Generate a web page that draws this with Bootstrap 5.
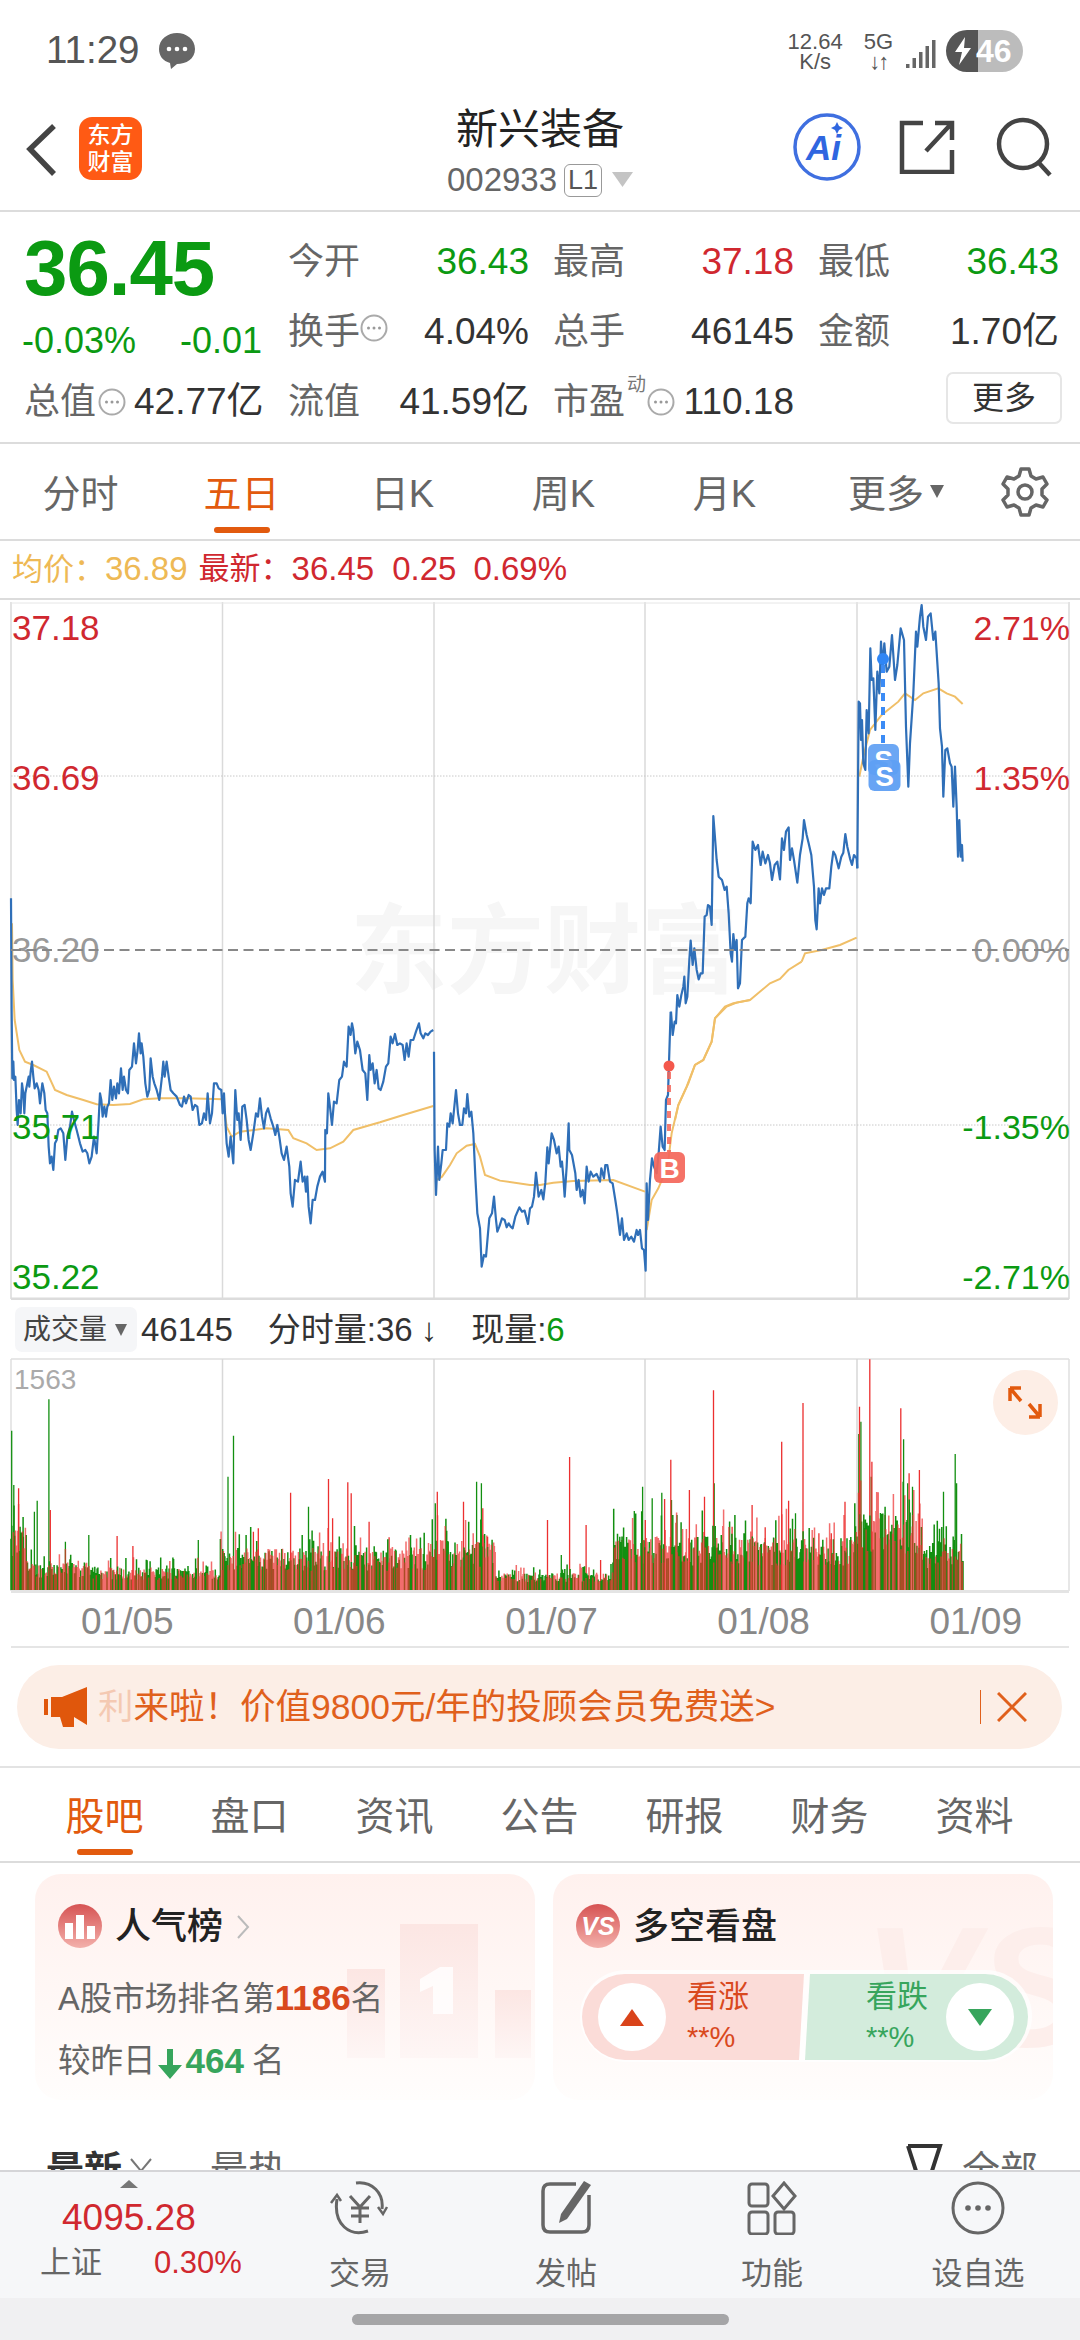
<!DOCTYPE html>
<html lang="zh-CN">
<head>
<meta charset="utf-8">
<title>新兴装备</title>
<link href="https://cdn.jsdelivr.net/npm/bootstrap@5.3.0/dist/css/bootstrap.min.css" rel="stylesheet">
<style>
:root{--up:#d0282f;--down:#0b9a12;--acc:#e25a0e;--lab:#666;--ink:#333}
html,body{margin:0;width:1080px;height:2340px;overflow:hidden;background:#fff}
body{font-family:"Liberation Sans","Noto Sans CJK SC",sans-serif;color:var(--ink)}
svg{display:block}
.x-app{height:2340px;width:1080px}
.x-status{height:90px;padding:30px 57px 0 46px;color:#555}
.x-time{font-size:38.500px;line-height:40px;margin-right:19px}
.x-net{font-size:22px;line-height:20px;text-align:center;color:#555;font-weight:500}
.x-batt{width:77px;height:42px;border-radius:21px;background:linear-gradient(90deg,#555 42%,#bcbcbc 42%);color:#fff;font-weight:700;font-size:32px;line-height:42px;padding-left:30px;position:relative}
.x-batt svg{position:absolute;left:8px;top:7px}
.x-head{height:122px;border-bottom:2px solid #dcdcdc;padding:0 28px 0 26px;position:relative}
.x-logo{width:63px;height:63px;border-radius:13px;background:#ff5a14;color:#fff;font-size:23px;line-height:27px;font-weight:500;text-align:center;padding-top:5px;margin-left:21px;margin-top:27px}
.x-back{margin-top:33px}
.x-titlebox{position:absolute;left:0;right:0;top:15px;text-align:center}
.x-name{font-size:42px;line-height:50px;color:#222}
.x-code{font-size:33px;line-height:36px;color:#666;margin-top:7px;display:flex;justify-content:center;align-items:center}
.x-l1{font-size:27px;line-height:31px;border:1px solid #999;border-radius:6px;width:38px;margin-left:7px;color:#555}
.x-tri{margin-left:10px;margin-top:-2px}
.x-grid{display:grid;grid-template-columns:240px 241px 241px 241px;column-gap:24px;grid-template-rows:70px 70px 70px;padding:12px 0 10px 24px;height:232px;border-bottom:2px solid #dcdcdc}
.x-pricebox{grid-row:1 / span 2;grid-column:1;margin-left:-2px;margin-top:2px}
.x-price{font-size:78px;line-height:84px;font-weight:700;letter-spacing:-1px;color:var(--down);margin-left:2px}
.x-chg{font-size:36px;line-height:42px;color:var(--down);margin-top:10px;width:240px}
.x-cell{font-size:37px;line-height:44px;color:var(--ink)}
.x-lb{font-size:36px;color:var(--lab)}
.x-up{color:var(--up)}.x-dn{color:var(--down)}
.x-sup{font-size:19px;color:#777;line-height:20px;margin-top:-5px;margin-left:2px}
.x-more{width:116px;height:52px;font-size:32px;line-height:48px;padding:0;border:2px solid #e6e6e6;border-radius:7px;background:#fff;color:var(--ink);margin-top:8px;margin-right:-3px}
.x-tabs{height:97px;border-bottom:2px solid #dcdcdc;flex-wrap:nowrap}
.x-tab{width:161px;padding:28px 0 0!important;text-align:center;font-size:38px;line-height:44px;color:var(--lab)}
.x-tab.x-on{color:var(--acc)}
.x-bar{display:block;width:56px;height:6px;border-radius:3px;background:var(--acc);margin:11px auto 0}
.x-gear{margin:23px 0 0 0;position:absolute;left:1001px}
.x-info{height:59px;border-bottom:2px solid #dcdcdc;font-size:31px;line-height:56px;padding-left:12px;color:var(--up);white-space:nowrap}
.x-nm{font-size:33px}
.x-vrow{height:58px;padding:7px 0 0 15px;font-size:30px;color:var(--ink);white-space:nowrap}
.x-vbtn{width:122px;height:45px;background:#f5f6f8;border-radius:7px;font-size:28px;line-height:45px;padding-left:8px;color:#444;margin-right:4px;display:flex;align-items:center}
.x-vnum{font-size:33px;line-height:45px}
.x-axis{height:52px;color:#888;font-size:37px;line-height:56px;padding-left:81px;gap:119.500px}
.x-rule{height:2px;background:#e5e5e5;margin:0 11px}
.x-banner{margin:17px 18px 0 17px;height:84px;background:#fceee6;color:#e0601c;font-size:35.500px;line-height:84px;padding-left:27px;border-radius:42px;white-space:nowrap}
.x-fade{opacity:.25}
.x-sep{width:1px;height:34px;background:#e0601c;margin-left:auto;margin-right:16px}
.x-close{margin-right:35px}
.x-stabs{margin-top:17px;border-top:2px solid #e3e3e3;border-bottom:2px solid #dcdcdc;height:97px;padding-left:32px;flex-wrap:nowrap}
.x-stab{width:145px;padding:26px 0 0!important;text-align:center;font-size:39px;line-height:46px;color:var(--lab)}
.x-stab.x-on{color:var(--acc)}
.x-stab .x-bar{margin-top:9px}
.x-cards{padding:11px 27px 0 35px;gap:18px}
.x-card{width:500px;height:226px;border:0;border-radius:26px;background:linear-gradient(180deg,#fff1ee,#fffdfc);overflow:hidden;padding:30px 0 0 23px;position:relative}
.x-deco{position:absolute;left:0;top:0;width:500px;height:226px}
.x-vs::before{content:"VS";position:absolute;left:310px;top:18px;font-size:170px;line-height:190px;font-weight:700;font-style:italic;color:#fdeeeb}
.x-ctitle{position:relative;height:45px;font-size:36px;line-height:45px;font-weight:500;color:#222;gap:13px}
.x-circ{width:44px;height:44px;border-radius:50%;background:linear-gradient(180deg,#d65353,#f3b0ab);flex:none;display:flex;align-items:center;justify-content:center;color:#fff;font-weight:700;font-style:italic;font-size:25px}
.x-line{position:relative;font-size:32.500px;line-height:40px;color:#666;white-space:nowrap}
.x-hot{font-weight:700;color:#d9491e;font-size:35px}
.x-grn{font-weight:700;color:#37a55c;font-size:35px}
.x-pill{position:relative;margin:21px 0 0 4px;width:452px;height:92px;padding:4px 2px 2px;background:rgba(255,255,255,.75);border-radius:46px}
.x-red{width:222px;height:86px;background:#fbdcd8;border-radius:43px 0 0 43px;clip-path:polygon(0 0,100% 0,calc(100% - 5px) 100%,0 100%);color:#d9491e}
.x-green{width:223px;height:86px;background:#d3ecdc;border-radius:0 43px 43px 0;clip-path:polygon(5px 0,100% 0,100% 100%,0 100%);color:#37a55c;margin-left:1px}
.x-ball{width:68px;height:68px;border-radius:50%;background:#fff;display:flex;align-items:center;justify-content:center;flex:none}
.x-vote{font-size:31px;line-height:38px}
.x-vote span{display:block;font-size:29px;line-height:38px;margin-top:2px}
.x-sort{margin-top:48px;padding-left:46px;font-size:38px;line-height:44px;color:var(--lab);position:relative;height:44px}
.x-foot{height:128px;background:#f6f7f9;border-top:2px solid #d5d5d8;flex:none}
.x-stock{width:257px;padding:8px 0 0 40px;font-size:31px;color:var(--lab);flex:none}
.x-stock svg{margin-left:80px}
.x-idx{font-size:37px;line-height:44px;color:var(--up);margin:8px 0 0 22px}
.x-item{width:206px;text-align:center;font-size:31px;line-height:38px;color:var(--lab);padding-top:9px;flex:none}
.x-item svg{margin:0 auto 20px}
.x-nav{height:42px;background:#f0f0f2;flex:none;padding-top:16px}
.x-handle{width:377px;height:11px;border-radius:6px;background:#a5a5a7;margin:0 auto}
</style>
</head>
<body>
<svg width="0" height="0" class="position-absolute">
<symbol id="dots" viewBox="0 0 28 28"><circle cx="14" cy="14" r="12.5" fill="none" stroke="#aaa" stroke-width="2"/><circle cx="8.5" cy="14" r="1.5" fill="#999"/><circle cx="14" cy="14" r="1.5" fill="#999"/><circle cx="19.5" cy="14" r="1.5" fill="#999"/></symbol>
<linearGradient id="fadebar" x1="0" y1="0" x2="0" y2="1"><stop offset="0" stop-color="#fce6e3"/><stop offset="1" stop-color="#fef6f5"/></linearGradient>
</svg>
<div class="x-app d-flex flex-column">
 <div class="flex-grow-1 overflow-hidden">
  <div class="x-status d-flex">
   <div class="x-time">11:29</div>
   <svg width="36" height="37" viewBox="0 0 36 37" style="margin-top:3px"><path d="M18 0C27 0 36 6 36 16S27 31 18 31L12 36 11 30C4 28 0 23 0 16 0 6 9 0 18 0Z" fill="#666"/><circle cx="10" cy="16" r="2.3" fill="#fff"/><circle cx="18" cy="16" r="2.3" fill="#fff"/><circle cx="26" cy="16" r="2.3" fill="#fff"/></svg>
   <div class="ms-auto d-flex">
    <div class="x-net" style="margin-right:21px;margin-top:2px">12.64<br>K/s</div>
    <div class="x-net" style="margin-right:13px;margin-top:2px">5G<br><span style="letter-spacing:-2px">↓↑</span></div>
    <svg width="30" height="28" viewBox="0 0 30 28" style="margin:10px 10px 0 0"><g fill="#666"><rect x="0" y="24" width="3.5" height="4"/><rect x="6.5" y="18" width="3.5" height="10"/><rect x="13" y="12" width="3.5" height="16"/><rect x="19.5" y="6" width="3.5" height="22"/><rect x="26" y="0" width="3.5" height="28"/></g></svg>
    <div class="x-batt"><svg width="18" height="28" viewBox="0 0 18 28"><path d="M11 0 1 15H8L5 28 17 11H10Z" fill="#fff"/></svg>46</div>
   </div>
  </div>
  <div class="x-head d-flex">
   <svg class="x-back" width="32" height="54" viewBox="0 0 32 54"><path d="M28 3 4 26 28 51" fill="none" stroke="#444" stroke-width="5.5"/></svg>
   <div class="x-logo">东方<br>财富</div>
   <div class="x-titlebox">
    <div class="x-name">新兴装备</div>
    <div class="x-code">002933<span class="x-l1">L1</span><svg class="x-tri" width="21" height="15" viewBox="0 0 21 15"><path d="M0 0H21L10.500 15Z" fill="#c4c4c4"/></svg></div>
   </div>
   <div class="ms-auto d-flex position-relative">
    <svg width="68" height="68" viewBox="0 0 68 68" style="margin:23px 38px 0 0"><circle cx="34" cy="34" r="32" fill="none" stroke="#3f6fe0" stroke-width="3.500"/><text x="13" y="47" font-family="Liberation Sans" font-weight="700" font-style="italic" font-size="35" fill="#2f66e0">Ai</text><path d="M44 9l2 4 4 2-4 2-2 4-2-4-4-2 4-2Z" fill="#2f66e0"/></svg>
    <svg width="56" height="54" viewBox="0 0 56 54" style="margin:30px 41px 0 0"><path d="M24 3H3V52H53V30M27 31 53 3M36 3H53V20" fill="none" stroke="#444" stroke-width="4.500"/></svg>
    <svg width="56" height="60" viewBox="0 0 56 60" style="margin-top:27px"><circle cx="27" cy="27" r="24" fill="none" stroke="#444" stroke-width="4.500"/><path d="M43 46 54 58" stroke="#444" stroke-width="4.500"/></svg>
   </div>
  </div>
  <div class="x-grid">
   <div class="x-pricebox">
    <div class="x-price">36.45</div>
    <div class="x-chg d-flex justify-content-between"><span>-0.03%</span><span>-0.01</span></div>
   </div>
   <div class="x-cell d-flex justify-content-between mt-3"><span class="x-lb">今开</span><span class="x-dn">36.43</span></div>
   <div class="x-cell d-flex justify-content-between mt-3"><span class="x-lb">最高</span><span class="x-up">37.18</span></div>
   <div class="x-cell d-flex justify-content-between mt-3"><span class="x-lb">最低</span><span class="x-dn">36.43</span></div>
   <div class="x-cell d-flex justify-content-between mt-3"><span class="x-lb">换手</span><svg width="28" height="28" class="me-auto mt-1"><use href="#dots"/></svg><span>4.04%</span></div>
   <div class="x-cell d-flex justify-content-between mt-3"><span class="x-lb">总手</span><span>46145</span></div>
   <div class="x-cell d-flex justify-content-between mt-3"><span class="x-lb">金额</span><span>1.70亿</span></div>
   <div class="x-cell d-flex mt-3"><span class="x-lb">总值</span><svg width="28" height="28" class="mt-2" style="margin-left:2px"><use href="#dots"/></svg><span class="ms-2">42.77亿</span></div>
   <div class="x-cell d-flex justify-content-between mt-3"><span class="x-lb">流值</span><span>41.59亿</span></div>
   <div class="x-cell d-flex mt-3"><span class="x-lb">市盈</span><span class="x-sup">动</span><svg width="28" height="28" class="mt-2" style="margin-left:1px"><use href="#dots"/></svg><span class="ms-auto">110.18</span></div>
   <div class="d-flex justify-content-end"><button type="button" class="btn x-more">更多</button></div>
  </div>
  <ul class="nav x-tabs position-relative">
   <li><a class="nav-link x-tab">分时</a></li>
   <li><a class="nav-link x-tab x-on">五日<span class="x-bar"></span></a></li>
   <li><a class="nav-link x-tab">日K</a></li>
   <li><a class="nav-link x-tab">周K</a></li>
   <li><a class="nav-link x-tab">月K</a></li>
   <li><a class="nav-link x-tab d-flex justify-content-center" style="padding-left:14px!important;width:168px">更多<svg width="14" height="13" viewBox="0 0 14 13" style="margin:13px 0 0 6px"><path d="M0 0H14L7 13Z" fill="#666"/></svg></a></li>
   <li class="x-gear"><svg width="48" height="50" viewBox="0 0 48 50"><path d="M20 2H28L30 9 35 12 42 10 46 17 41 22V28L46 33 42 40 35 38 30 41 28 48H20L18 41 13 38 6 40 2 33 7 28V22L2 17 6 10 13 12 18 9Z" fill="none" stroke="#666" stroke-width="3.500" stroke-linejoin="round"/><circle cx="24" cy="25" r="7" fill="none" stroke="#666" stroke-width="3.500"/></svg></li>
  </ul>
  <div class="x-info d-flex"><span style="color:#eeb955">均价：<span class="x-nm">36.89</span></span><span style="margin-left:11px">最新：</span><span class="x-nm">36.45</span><span class="x-nm" style="margin-left:18px">0.25</span><span class="x-nm" style="margin-left:17px">0.69%</span></div>
  <svg width="1080" height="700" viewBox="0 600 1080 700" font-family="Liberation Sans, Noto Sans CJK SC, sans-serif">
   <text x="350" y="985" font-size="97" font-weight="700" fill="#f6f6f6" font-family="Noto Sans CJK SC">东方财富</text>
   <g stroke="#dadada" stroke-width="1.500"><path d="M11 602V1299M222.500 602V1299M434 602V1299M645 602V1299M857 602V1299M1069 602V1299"/></g>
   <path d="M11 603H1069" stroke="#e6e6e6"/>
   <path d="M11 1299H1069" stroke="#dcdcdc" stroke-width="3"/>
   <path d="M11 776H1069M11 1125H1069" stroke="#c8c8c8" stroke-dasharray="1.500 1.500"/>
   <g fill="none" stroke="#f0bf68" stroke-width="2">
    <polyline vector-effect="non-scaling-stroke" transform="translate(0 880) scale(.3333)" points="36,130 38,300 44,420 58,510 75,545 100,555 140,575 165,630 200,645 250,660 290,673 340,675 390,672 430,658 480,655 560,655 670,658"/>
    <polyline vector-effect="non-scaling-stroke" transform="translate(0 880) scale(.3333)" points="670,658 680,740 695,770 720,755 800,745 865,750 880,775 920,790 950,810 990,805 1030,785 1060,750 1140,727 1210,705 1300,678"/>
    <polyline vector-effect="non-scaling-stroke" transform="translate(430 1000) scale(.3333)" points="20,540 36,530 60,495 80,460 110,437 135,432 150,470 165,525 210,542 300,555 330,555 370,548 430,543 550,540 645,575"/>
    <polyline vector-effect="non-scaling-stroke" transform="translate(430 1000) scale(.3333)" points="650,690 665,600 685,565 700,530 715,480 725,400 745,315 770,260 795,195 820,180 845,125 855,55 885,20 910,10 960,0"/>
    <polyline vector-effect="non-scaling-stroke" transform="translate(640 780) scale(.3333)" points="485,545 495,520 545,510 600,495 650,473"/>
    <polyline vector-effect="non-scaling-stroke" transform="translate(640 780) scale(.3333)" points="105,1020 115,975 145,910 165,855 190,840 215,785 225,715 260,680 290,668 330,660 390,610 420,597 445,570 485,545"/>
    <polyline vector-effect="non-scaling-stroke" transform="translate(840 600) scale(.3333)" points="58,530 70,470 90,390 125,345 175,305 195,280 225,300 250,280 295,265 320,280 345,290 368,312"/>
   </g>
   <g fill="none" stroke="#2f6fb8" stroke-width="2.200" stroke-linejoin="round">
    <polyline vector-effect="non-scaling-stroke" transform="translate(0 880) scale(.3333)" points="33,55 35,400 37,595 40,545 42,600 46,590 50,690 53,735 57,660 62,700 66,610 70,640 73,700 76,640 82,610 86,590 88,620 92,575 96,545 100,590 104,625 110,610 116,630 120,670 127,610 133,640 137,690 142,700 146,800 150,850 155,830 160,870 165,790 170,780 175,750 182,745 190,760 196,840 202,770 210,740 216,695 222,720 230,750 240,790 248,815 256,810 262,820 268,850 275,830 282,770 290,820 296,720 300,640 304,660 308,710 313,680 318,710 322,680 327,670 332,600 337,660 342,620 348,655 352,610 357,640 363,565 368,630 372,590 378,630 384,640 388,570 396,560 402,490 408,550 413,510 417,460 422,520 425,490 430,530 436,610 442,650 448,630 452,535 458,590 463,610 470,630 478,660 486,590 490,545 494,590 500,545 506,590 512,630 520,640 530,650 540,675 546,680 552,650 558,670 566,645 572,650 578,690 585,675 592,680 598,735 606,730 612,700 618,720 623,640 630,730 636,700 642,610 650,610 656,625 664,630 668,700 672,640 676,720 680,790 686,830 692,770 700,850 706,630 712,720 716,700 722,780 727,680 734,675 740,720 746,780 752,810 760,760 768,700 774,710 780,655 786,710 792,745 798,700 804,685 812,715 820,740 826,765 832,735 838,770 845,820 852,840 860,800 868,860 872,940 878,980 885,900 894,905 902,845 908,905 914,890 918,935 922,890 926,980 932,1030 938,960 945,960 952,920 960,890 968,875 975,905 976,750 981,760 985,640 990,680 996,735 1002,665 1010,670 1018,600 1026,590 1032,545 1040,560 1046,440 1052,465 1056,430 1060,450 1066,520 1072,485 1080,510 1088,570 1096,580 1102,660 1108,525 1112,570 1118,550 1124,610 1130,570 1136,625 1142,630 1150,605 1158,560 1165,550 1172,470 1178,490 1185,462 1192,495 1200,490 1208,495 1214,540 1220,490 1226,530 1232,480 1240,480 1248,455 1257,430 1262,460 1270,475 1276,460 1284,465 1292,455 1300,450"/>
    <polyline vector-effect="non-scaling-stroke" transform="translate(430 1000) scale(.3333)" points="12,155 14,450 18,585 24,440 28,540 34,490 38,450 48,450 52,370 58,380 62,340 68,370 72,330 78,270 84,340 90,375 97,375 102,325 108,340 112,282 118,350 124,335 130,400 136,530 142,640 150,685 155,800 162,765 168,770 174,700 178,655 186,640 192,590 198,660 202,695 208,680 216,655 224,660 230,682 236,670 242,680 248,685 256,650 268,622 276,635 284,632 294,672 300,625 306,620 312,590 318,518 326,590 334,570 340,598 346,548 352,442 356,490 360,450 365,400 372,420 380,460 386,440 392,500 396,485 400,530 404,590 410,500 416,370 418,450 426,465 436,520 440,570 446,540 452,590 458,570 464,610 470,500 476,545 482,515 490,530 500,522 510,545 514,505 522,535 526,495 532,495 540,545 548,550 556,600 562,640 570,705 576,655 582,720 590,700 596,720 604,710 612,725 620,690 624,705 630,690 636,745 642,750 647,812 650,550 654,660 660,540 666,475 672,500 680,520 686,460 692,380 698,440 704,450 708,300 714,285 717,190 722,35"/>
    <polyline vector-effect="non-scaling-stroke" transform="translate(640 780) scale(.3333)" points="93,695 98,765 104,725 108,730 112,645 118,680 124,645 130,620 133,590 137,670 142,650 148,540 152,482 158,555 163,505 170,570 176,598 182,580 188,580 194,410 200,405 204,375 210,380 215,435 220,108 224,160 230,240 236,290 246,300 254,330 260,320 266,400 272,520 276,545 280,462 285,510 290,480 294,625 300,610 306,480 316,470 322,370 326,355 332,370 338,185 346,210 354,195 362,255 368,215 376,250 384,225 390,250 396,300 404,255 412,245 420,298 426,175 432,210 438,155 446,142 450,240 456,205 462,240 472,308 480,225 488,175 492,120 500,165 506,190 514,225 522,320 526,420 530,448 536,325 540,370 546,325 552,345 558,325 568,325 574,260 580,215 586,225 596,265 604,230 610,218 616,162 622,200 630,235 636,255 642,225 650,235 652,265"/>
    <polyline vector-effect="non-scaling-stroke" transform="translate(840 600) scale(.3333)" points="52,805 56,305 60,310 63,420 66,360 70,490 76,510 80,330 86,400 91,145 95,240 100,235 106,390 112,215 118,280 123,125 128,200 133,130 140,215 148,200 156,105 165,240 172,195 182,85 192,120 198,380 205,560 210,430 214,370 220,280 228,95 232,140 240,50 245,15 250,80 258,120 264,50 272,40 280,120 286,95 296,250 300,385 306,440 310,590 316,450 322,445 330,490 335,500 340,620 345,500 350,620 354,770 358,660 362,770 366,735 368,785"/>
   </g>
   <g font-size="35">
    <text x="12" y="640" fill="#d0282f">37.18</text><text x="12" y="790" fill="#d0282f">36.69</text>
    <text x="12" y="962" fill="#999">36.20</text><text x="12" y="1139" fill="#0b9a12">35.71</text>
    <text x="12" y="1289" fill="#0b9a12">35.22</text>
    <g text-anchor="end" font-size="34"><text x="1070" y="640" fill="#d0282f">2.71%</text><text x="1070" y="790" fill="#d0282f">1.35%</text><text x="1070" y="962" fill="#999">0.00%</text><text x="1070" y="1139" fill="#0b9a12">-1.35%</text><text x="1070" y="1289" fill="#0b9a12">-2.71%</text></g>
   </g>
   <path d="M11 950H1069" stroke="#888" stroke-width="2" stroke-dasharray="10 5.500"/>
   <path d="M669 1072V1152" stroke="#f4665a" stroke-width="4" stroke-dasharray="7 6" opacity=".85"/>
   <circle cx="669" cy="1066" r="5.500" fill="#f4584c"/>
   <rect x="654" y="1152" width="31" height="31" rx="6" fill="#f4665a" opacity=".92"/>
   <text x="669.500" y="1178" text-anchor="middle" font-size="28" font-weight="700" fill="#fff">B</text>
   <path d="M883 665V743" stroke="#3b8bf5" stroke-width="4" stroke-dasharray="8 6"/>
   <circle cx="883" cy="659" r="6" fill="#2f86f5"/>
   <rect x="868" y="744" width="31" height="31" rx="6" fill="#5f9ff3" opacity=".92"/>
   <text x="883.500" y="770" text-anchor="middle" font-size="28" font-weight="700" fill="#fff">S</text>
   <rect x="868.500" y="760" width="32" height="31" rx="6" fill="#5f9ff3" opacity=".95"/>
   <text x="884.500" y="786" text-anchor="middle" font-size="28" font-weight="700" fill="#fff">S</text>
  </svg>
  <div class="x-vrow d-flex">
   <div class="x-vbtn">成交量<svg width="12" height="14" viewBox="0 0 12 14" class="ms-2"><path d="M0 1H12L6 13Z" fill="#666"/></svg></div>
   <span class="x-vnum">46145</span><span class="x-vnum" style="margin-left:35px">分时量:36</span><span class="x-vnum" style="margin-left:8px">↓</span><span class="x-vnum" style="margin-left:34px">现量:<span class="x-dn">6</span></span>
  </div>
  <svg id="vol" width="1080" height="236" viewBox="0 1358 1080 236" font-family="Liberation Sans, sans-serif">
   <path d="M11 1359H1069M11 1359V1591M1069 1359V1591" stroke="#e0e0e0" stroke-width="1.500" fill="none"/>
   <path d="M222.500 1359V1591M434 1359V1591M645 1359V1591M857 1359V1591" stroke="#d8d8d8" stroke-width="1.500"/>
   <path d="M11 1591.500H1069" stroke="#e4e4e4" stroke-width="3"/>
   <g id="bars"></g>
   <text x="14" y="1389" font-size="28" fill="#aaa">1563</text>
   <circle cx="1025.500" cy="1402.500" r="32.500" fill="#fdeee6"/>
   <path d="M1010 1388H1021M1010 1388V1401M1010 1388 1021 1401M1040 1417H1029M1040 1417V1404M1040 1417 1029 1404" fill="none" stroke="#e25a0e" stroke-width="3.500"/>
  </svg>
  <div class="x-axis d-flex"><span>01/05</span><span>01/06</span><span>01/07</span><span>01/08</span><span>01/09</span></div>
  <div class="x-rule"></div>
  <div class="x-banner d-flex">
   <svg width="46" height="40" viewBox="0 0 46 40" class="align-self-center" style="margin-right:8px"><path d="M0 12H4V28H0ZM7 10H18L43 0V38L30 30V40H19L16 30H7Z" fill="#e0570c"/></svg>
   <span><span class="x-fade">利</span>来啦！价值9800元/年的投顾会员免费送&gt;</span>
   <span class="x-sep align-self-center"></span>
   <svg class="x-close align-self-center" width="30" height="30" viewBox="0 0 30 30"><path d="M1 1 29 29M29 1 1 29" stroke="#e0601c" stroke-width="3"/></svg>
  </div>
  <ul class="nav x-stabs">
   <li><a class="nav-link x-stab x-on">股吧<span class="x-bar"></span></a></li>
   <li><a class="nav-link x-stab">盘口</a></li>
   <li><a class="nav-link x-stab">资讯</a></li>
   <li><a class="nav-link x-stab">公告</a></li>
   <li><a class="nav-link x-stab">研报</a></li>
   <li><a class="nav-link x-stab">财务</a></li>
   <li><a class="nav-link x-stab">资料</a></li>
  </ul>
  <div class="x-cards d-flex">
   <div class="card x-card">
    <svg class="x-deco" viewBox="0 0 500 226"><g fill="url(#fadebar)"><rect x="365" y="50" width="78" height="134"/><rect x="312" y="95" width="38" height="89"/><rect x="460" y="116" width="36" height="68"/></g><path d="M385 105 405 93H418V140H398V112L385 118Z" fill="#fff" opacity=".8"/></svg>
    <div class="x-ctitle d-flex">
     <div class="x-circ"><svg width="30" height="26" viewBox="0 0 30 26"><g fill="#fff"><rect x="0" y="10" width="8" height="16"/><rect x="11" y="2" width="8" height="24"/><rect x="22" y="13" width="8" height="13"/></g></svg></div>
     <span>人气榜</span>
     <svg width="14" height="26" viewBox="0 0 14 26" class="align-self-center"><path d="M2 2 12 13 2 24" fill="none" stroke="#bbb" stroke-width="2"/></svg>
    </div>
    <div class="x-line" style="margin-top:29px">A股市场排名第<span class="x-hot">1186</span>名</div>
    <div class="x-line d-flex align-items-center" style="margin-top:22px">较昨日<svg width="24" height="30" viewBox="0 0 24 30" style="margin:6px 4px 0 2px"><path d="M9 0H15V16H24L12 30 0 16H9Z" fill="#37a55c"/></svg><span class="x-grn">464</span><span class="ms-2">名</span></div>
   </div>
   <div class="card x-card x-vs">
    <div class="x-ctitle d-flex">
     <div class="x-circ">VS</div>
     <span>多空看盘</span>
    </div>
    <div class="x-pill d-flex">
     <div class="x-red d-flex align-items-center"><div class="x-ball ms-3"><svg width="24" height="17" viewBox="0 0 24 17"><path d="M12 0 24 17H0Z" fill="#d9431a"/></svg></div><div class="x-vote" style="margin-left:21px">看涨<span>**%</span></div></div>
     <div class="x-green d-flex align-items-center"><div class="x-vote" style="margin-left:61px">看跌<span>**%</span></div><div class="x-ball" style="margin-left:18px"><svg width="24" height="17" viewBox="0 0 24 17"><path d="M12 17 24 0H0Z" fill="#37a55c"/></svg></div></div>
    </div>
   </div>
  </div>
  <div class="x-sort d-flex">
   <span style="font-weight:700;color:#333">最新</span>
   <svg width="22" height="14" viewBox="0 0 22 14" style="margin:10px 0 0 8px"><path d="M1 1 11 13 21 1" fill="none" stroke="#777" stroke-width="2"/></svg>
   <span style="margin-left:58px">最热</span>
   <svg class="ms-auto" width="38" height="44" viewBox="0 0 38 44" style="margin-top:-4px"><path d="M3 2H35L26 30V44M12 44V30L3 2" fill="none" stroke="#333" stroke-width="4"/></svg>
   <span style="margin:0 42px 0 19px">全部</span>
  </div>
 </div>
 <div class="x-foot d-flex">
  <div class="x-stock">
   <svg width="18" height="8" viewBox="0 0 18 8"><path d="M9 0 18 8H0Z" fill="#777"/></svg>
   <div class="x-idx">4095.28</div>
   <div class="d-flex" style="line-height:38px;margin-top:4px"><span>上证</span><span class="x-up" style="margin-left:52px">0.30%</span></div>
  </div>
  <div class="x-item"><svg width="64" height="54" viewBox="0 0 64 54"><g fill="none" stroke="#666" stroke-width="3"><path d="M28 2C44 0 56 12 54 28M40 50C22 56 5 44 9 18"/><path d="M3 22 9 14 13 20M50 26 55 33 59 26" stroke-width="2.500"/><path d="M22 15 32 26 42 15M32 26V42M23 27H41M23 35H41"/></g></svg>交易</div>
  <div class="x-item"><svg width="52" height="54" viewBox="0 0 52 54"><g fill="none" stroke="#666" stroke-width="3.500"><path d="M36 3H10Q3 3 3 10V44Q3 51 10 51H42Q49 51 49 44V14"/></g><path d="M44 0 51 4 27 38 19 42 21 33Z" fill="#666"/></svg>发帖</div>
  <div class="x-item"><svg width="50" height="54" viewBox="0 0 50 54"><g fill="none" stroke="#666" stroke-width="3"><rect x="2" y="3" width="19" height="22" rx="3"/><path d="M37 2 48 15 37 28 26 15Z"/><rect x="2" y="31" width="19" height="22" rx="3"/><rect x="28" y="31" width="19" height="22" rx="3"/></g></svg>功能</div>
  <div class="x-item"><svg width="54" height="54" viewBox="0 0 54 54"><circle cx="27" cy="27" r="25" fill="none" stroke="#666" stroke-width="3"/><circle cx="17" cy="27" r="2.800" fill="#666"/><circle cx="27" cy="27" r="2.800" fill="#666"/><circle cx="37" cy="27" r="2.800" fill="#666"/></svg>设自选</div>
 </div>
 <div class="x-nav"><div class="x-handle"></div></div>
</div>
<script src="https://cdn.jsdelivr.net/npm/bootstrap@5.3.0/dist/js/bootstrap.bundle.min.js"></script>
<script>
(function(){
 var base=1590;
 var peaks=[['g',17,362],['g',20,525],['r',27,535],['g',50,605],['g',54,572],['g',71,268],['r',73,600],['g',34,680],['g',95,695],['g',129,675],['r',170,678],['r',193,708],['g',288,690],['g',331,500],['g',339,377],['r',422,548],['g',448,590],['r',477,507],['r',505,517],['r',510,550],['r',483,625],['r',536,635],['r',375,655],['r',368,665],['r',565,682],['g',632,580],['r',635,545],['r',673,575],['g',692,515],['g',699,520],['r',701,595],['r',708,680],['r',795,630],['r',827,441],['r',851,645],['g',815,735],['r',872,750],['r',903,690],['g',921,603],['g',933,530],['r',937,630],['g',947,565],['g',961,548],['r',965,567],['g',975,570],['r',974,449],['g',983,615],['r',1001,540],['r',1023,560],['g',1037,520],['r',1036,241],['r',1063,650],['r',1092,585],['r',1111,652],['r',1135,395],['r',1145,572],['g',1155,610],['r',1166,279],['r',1189,670],['r',1207,670],['r',1227,575],['g',1247,372],['r',1248,290],['g',1250,335],['r',1263,148],['r',1266,455],['g',1265,500],['r',1285,615],['r',1308,295],['g',1312,388],['r',1320,490],['g',1318,520],['g',1325,530],['r',1335,480],['g',1370,545],['g',1387,432],['g',1389,520],['g',1385,690]];
 var zones=[[16,40,650],[40,130,760],[130,320,775],[320,620,715],[620,720,690],[720,890,790],[890,1240,680],[1240,1340,610],[1340,1399,700]];
 var seed=12345;function rnd(){seed=(seed*1103515245+12345)&2147483647;return seed/2147483647;}
 var R='',G='';
 zones.forEach(function(z){
  for(var zx=z[0];zx<z[1];zx+=1.1){
   var x=(zx/1.452).toFixed(1),H=(843-z[2])/3;
   var h=H*(.45+.55*Math.pow(rnd(),1.1));
   if(rnd()<.22)h*=1.5;
   var d='M'+x+' '+(base-h).toFixed(1)+'V'+base;
   if(rnd()<.5)R+=d;else G+=d;
  }
 });
 var PR='',PG='';
 peaks.forEach(function(p){var d='M'+(p[1]/1.452).toFixed(1)+' '+(1310+p[2]/3).toFixed(1)+'V'+base;if(p[0]=='r')PR+=d;else PG+=d;});
 document.getElementById('bars').innerHTML=
  '<path d="'+PG+'" stroke="#128f10" stroke-width="1.3" fill="none"/><path d="'+PR+'" stroke="#ec2f2f" stroke-width="1.3" fill="none"/>'+
  '<path d="'+G+'" stroke="#128f10" stroke-width="1.5" fill="none"/><path d="'+R+'" stroke="#ec2f2f" stroke-width="1.5" fill="none" opacity=".7"/>';
})();
</script>
</body>
</html>
